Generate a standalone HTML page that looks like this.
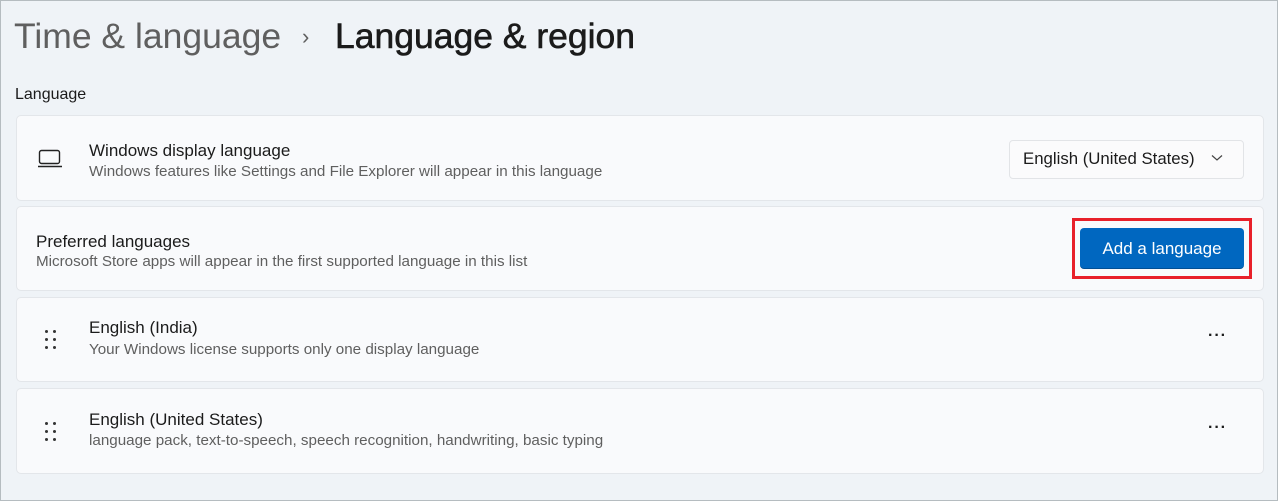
<!DOCTYPE html>
<html><head><style>
*{margin:0;padding:0;box-sizing:border-box}
body{width:1278px;height:501px;background:#eff3f7;font-family:"Liberation Sans",sans-serif;position:relative;overflow:hidden;color:#1b1b1b}
.frame{position:absolute;left:0;top:0;width:1278px;height:501px;border:1px solid #b5bcc0;pointer-events:none}
.a{position:absolute;white-space:nowrap}
.card{position:absolute;left:16px;width:1248px;background:#f9fafc;border:1px solid #e3e6ea;border-radius:5px}
.t{font-size:17px;color:#1b1b1b}
.s{font-size:15.2px;color:#5f5f5f}
.dots{position:absolute;width:14px;height:20px}
.dots i{position:absolute;width:3.4px;height:3.4px;border-radius:50%;background:#333}
</style></head><body>
<div class="frame"></div>
<div class="a" style="left:14px;top:16px;font-size:35.5px;color:#5f5f5f">Time &amp; language</div>
<div class="a" style="left:302px;top:24px;font-size:22px;color:#5f5f5f">›</div>
<div class="a" style="left:335px;top:16px;font-size:35.5px;color:#1b1b1b;-webkit-text-stroke:0.6px #1b1b1b">Language &amp; region</div>
<div class="a" style="left:15px;top:86px;font-size:16px">Language</div>

<div class="card" style="top:115px;height:86px"></div>
<svg class="a" style="left:37px;top:149px" width="26" height="20" viewBox="0 0 26 20"><rect x="2.5" y="1.5" width="20" height="13" rx="2" fill="none" stroke="#222" stroke-width="1.4"/><line x1="1" y1="17.5" x2="25" y2="17.5" stroke="#222" stroke-width="1.4"/></svg>
<div class="a t" style="left:89px;top:141px">Windows display language</div>
<div class="a s" style="left:89px;top:163px">Windows features like Settings and File Explorer will appear in this language</div>
<div class="a" style="left:1009px;top:140px;width:235px;height:39px;background:#fbfbfc;border:1px solid #e2e4e7;border-radius:4px"></div>
<div class="a" style="left:1023px;top:149px;font-size:16.8px">English (United States)</div>
<svg class="a" style="left:1211px;top:154px" width="12" height="8"><path d="M1 1.5L6 6L11 1.5" fill="none" stroke="#444" stroke-width="1.2"/></svg>

<div class="card" style="top:206px;height:85px"></div>
<div class="a t" style="left:36px;top:232px">Preferred languages</div>
<div class="a s" style="left:36px;top:253px">Microsoft Store apps will appear in the first supported language in this list</div>
<div class="a" style="left:1072px;top:218px;width:180px;height:61px;border:3px solid #e8202a"></div>
<div class="a" style="left:1080px;top:228px;width:164px;height:41px;background:#0067c0;border-radius:4px;border-bottom:1px solid #004f95;color:#fff;font-size:17px;text-align:center;line-height:41px">Add a language</div>

<div class="card" style="top:297px;height:85px"></div>
<div class="dots" style="left:45px;top:330px"><i style="left:0;top:0"></i><i style="left:8px;top:0"></i><i style="left:0;top:8px"></i><i style="left:8px;top:8px"></i><i style="left:0;top:16px"></i><i style="left:8px;top:16px"></i></div>
<div class="a t" style="left:89px;top:318px">English (India)</div>
<div class="a s" style="left:89px;top:341px">Your Windows license supports only one display language</div>
<div class="a" style="left:1208px;top:327px;font-size:16px;letter-spacing:1px;font-weight:bold">···</div>

<div class="card" style="top:388px;height:86px"></div>
<div class="dots" style="left:45px;top:422px"><i style="left:0;top:0"></i><i style="left:8px;top:0"></i><i style="left:0;top:8px"></i><i style="left:8px;top:8px"></i><i style="left:0;top:16px"></i><i style="left:8px;top:16px"></i></div>
<div class="a t" style="left:89px;top:410px">English (United States)</div>
<div class="a s" style="left:89px;top:432px">language pack, text-to-speech, speech recognition, handwriting, basic typing</div>
<div class="a" style="left:1208px;top:419px;font-size:16px;letter-spacing:1px;font-weight:bold">···</div>
</body></html>
